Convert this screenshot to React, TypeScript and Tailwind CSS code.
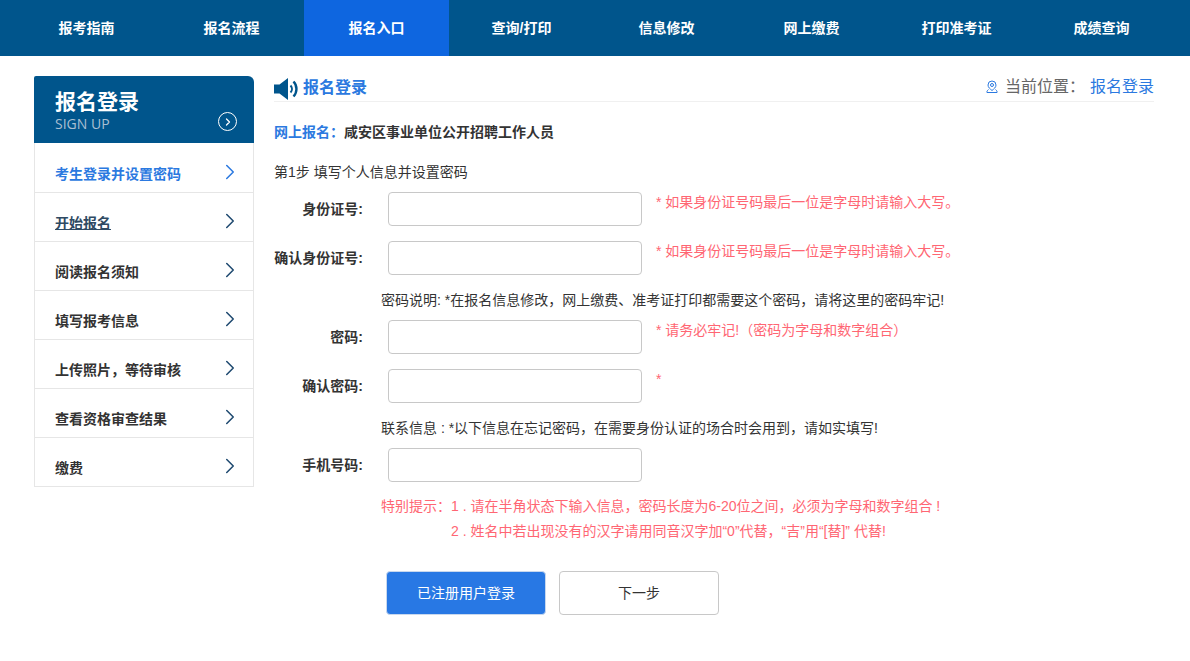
import React from "react";
import { ChevronRight } from "lucide-react";

const nav = ["报考指南", "报名流程", "报名入口", "查询/打印", "信息修改", "网上缴费", "打印准考证", "成绩查询"];
const side = ["考生登录并设置密码", "开始报名", "阅读报名须知", "填写报考信息", "上传照片，等待审核", "查看资格审查结果", "缴费"];

function Row({ label, hint }: { label: string; hint: string }) {
  return (
    <div className="flex h-[34px] items-start">
      <div className="w-[91px] pt-[8px] pr-[2px] text-right text-[14px] leading-[18px] font-bold text-[#333]">{label}</div>
      <div className="ml-[23px] h-[34px] w-[254px] rounded-[4px] border border-[#c8c8c8] bg-white" />
      <div className="ml-[14px] pt-[1px] text-[14px] leading-[18px] text-[#ff6673]">{hint}</div>
    </div>
  );
}

export default function App() {
  return (
    <div className="h-[661px] w-[1190px] overflow-hidden bg-white font-['Liberation_Sans','Noto_Sans_CJK_SC',sans-serif] text-[#333]">
      <div className="flex h-[56px] bg-[#00558c] pl-[14px]">
        {nav.map((n, i) => (
          <div
            key={n}
            className={`flex w-[145px] items-center justify-center text-[14px] font-bold text-white ${i === 2 ? "bg-[#0e66e0]" : ""}`}
          >
            {n}
          </div>
        ))}
      </div>

      <div className="flex pt-[20px] pl-[34px]">
        <div className="w-[220px]">
          <div className="relative h-[67px] rounded-tr-[6px] rounded-tl-[2px] bg-[#00558c] pt-[13px] pl-[21px]">
            <div className="text-[21px] leading-[26px] font-bold text-white">报名登录</div>
            <div className="mt-[1px] font-['Open_Sans',sans-serif] text-[14px] leading-[16px] text-[#a9bfd2]">SIGN UP</div>
            <div className="absolute top-[36px] right-[17px] flex h-[19px] w-[19px] items-center justify-center rounded-full border-[1.5px] border-white">
              <ChevronRight size={12} strokeWidth={2.5} className="text-white" />
            </div>
          </div>
          <div className="border-x border-b border-[#e6e6e6]">
            {side.map((s, i) => (
              <div
                key={s}
                className={`flex items-center justify-between pr-[16px] pl-[20px] ${i === 0 ? "h-[50px]" : i === side.length - 1 ? "h-[48px]" : "h-[49px]"} ${i < side.length - 1 ? "border-b border-[#e6e6e6]" : ""}`}
              >
                <span
                  className={`mt-[12px] text-[14px] leading-[18px] font-bold ${i === 0 ? "text-[#2b79e0]" : i === 1 ? "text-[#2f4a63] underline" : "text-[#333]"}`}
                >
                  {s}
                </span>
                <ChevronRight size={26} strokeWidth={1.4} className={`-mr-[6px] mt-[8px] ${i === 0 ? "text-[#2b79e0]" : "text-[#1f4a70]"}`} />
              </div>
            ))}
          </div>
        </div>

        <div className="ml-[20px] w-[880px]">
          <div className="flex h-[26px] items-start justify-between border-b border-[#f0f0f0]">
            <div className="flex items-center">
              <svg width="25" height="22" viewBox="0 0 25 22" className="mt-[1px]">
                <path d="M0 6.5h5.5L14 0v22l-8.5-6.5H0z" fill="#00558c" />
                <path d="M16.5 7.5a5 5 0 0 1 0 7" fill="none" stroke="#00558c" strokeWidth="2" />
                <path d="M19.5 3.5a11 11 0 0 1 0 15" fill="none" stroke="#00558c" strokeWidth="2.4" />
              </svg>
              <span className="ml-[4px] text-[16px] leading-[24px] font-bold text-[#2b79e0]">报名登录</span>
            </div>
            <div className="flex items-center">
              <svg width="14" height="14" viewBox="0 0 14 14" fill="none" stroke="#2b79e0" strokeWidth="1">
                <path d="M7 10.5C5 8.800 3 7.400 3 5a4 4 0 0 1 8 0c0 2.400-2 3.800-4 5.500z" />
                <circle cx="7" cy="5" r="1.500" />
                <path d="M3.500 9.500C2 10.500 1.500 12.500 2 12.500h10c.5 0 0-2-1.500-3" />
              </svg>
              <span className="ml-[6px] text-[16px] leading-[22px] text-[#666]">当前位置：</span>
              <span className="ml-[5px] text-[16px] leading-[22px] text-[#2b79e0]">报名登录</span>
            </div>
          </div>

          <div className="mt-[21px] text-[14px] leading-[18px] font-bold">
            <span className="text-[#2b79e0]">网上报名：</span>
            <span className="text-[#333]">咸安区事业单位公开招聘工作人员</span>
          </div>
          <div className="mt-[22px] text-[14px] leading-[18px]">第1步 填写个人信息并设置密码</div>

          <div className="mt-[11px] flex flex-col">
            <Row label="身份证号:" hint="* 如果身份证号码最后一位是字母时请输入大写。" />
            <div className="mt-[15px]">
              <Row label="确认身份证号:" hint="* 如果身份证号码最后一位是字母时请输入大写。" />
            </div>
            <div className="mt-[16px] ml-[107px] text-[14px] leading-[18px]">密码说明: *在报名信息修改，网上缴费、准考证打印都需要这个密码，请将这里的密码牢记!</div>
            <div className="mt-[11px]">
              <Row label="密码:" hint="* 请务必牢记!（密码为字母和数字组合）" />
            </div>
            <div className="mt-[15px]">
              <Row label="确认密码:" hint="*" />
            </div>
            <div className="mt-[16px] ml-[107px] text-[14px] leading-[18px]">联系信息 : *以下信息在忘记密码，在需要身份认证的场合时会用到，请如实填写!</div>
            <div className="mt-[11px]">
              <Row label="手机号码:" hint="" />
            </div>
            <div className="mt-[12px] ml-[107px] text-[14px] leading-[25px] text-[#ff6673]">
              <div>特别提示：1 . 请在半角状态下输入信息，密码长度为6-20位之间，必须为字母和数字组合 !</div>
              <div className="pl-[70px]">2 . 姓名中若出现没有的汉字请用同音汉字加“0”代替，“吉”用“[替]” 代替!</div>
            </div>
            <div className="mt-[27px] ml-[112px] flex gap-[13px]">
              <div className="flex h-[44px] w-[160px] items-center justify-center rounded-[4px] border border-[#c8d8ee] bg-[#2878e4] text-[14px] text-white">已注册用户登录</div>
              <div className="flex h-[44px] w-[160px] items-center justify-center rounded-[4px] border border-[#c8c8c8] bg-white text-[14px] text-[#333]">下一步</div>
            </div>
          </div>
        </div>
      </div>
    </div>
  );
}
